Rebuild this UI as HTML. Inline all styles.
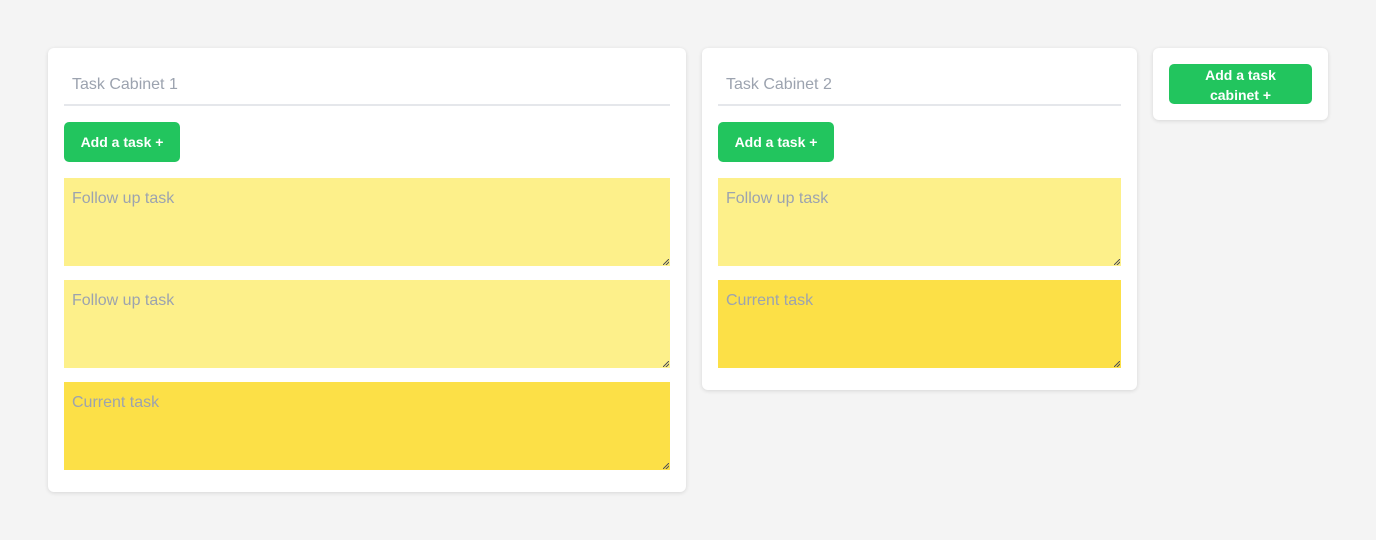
<!DOCTYPE html><html><head><style>
body{margin:0;background:#f4f4f4;font-family:"Liberation Sans",sans-serif;width:1376px;height:540px;position:relative;overflow:hidden}
.card{position:absolute;background:#fff;border-radius:6px;box-shadow:0 1px 4px rgba(0,0,0,.12)}
.title{position:absolute;left:16px;right:16px;top:16px;height:42px;border-bottom:2px solid #e5e7eb;color:#9ca3af;font-size:16px;line-height:42px;padding-left:8px;box-sizing:border-box}
.btn{position:absolute;background:#22c55e;color:#fff;border-radius:5px;font-size:14px;font-weight:bold;text-align:center}
.ta{position:absolute;left:16px;right:16px;height:88px;color:#9ca3af;font-size:16px;padding:12px 8px;box-sizing:border-box}
.f{background:#fdf08a}.c{background:#fce047}
.ta:after{content:"";position:absolute;right:1px;bottom:1px;width:6px;height:6px;background:linear-gradient(135deg,transparent 45%,#555 45%,#555 55%,transparent 55%,transparent 70%,#555 70%,#555 80%,transparent 80%)}
</style></head><body>
<div class="card" style="left:48px;top:48px;width:638px;height:444px">
<div class="title">Task Cabinet 1</div>
<div class="btn" style="left:16px;top:74px;width:116px;height:40px;line-height:40px">Add a task +</div>
<div class="ta f" style="top:130px">Follow up task</div>
<div class="ta f" style="top:232px">Follow up task</div>
<div class="ta c" style="top:334px">Current task</div>
</div>
<div class="card" style="left:702px;top:48px;width:435px;height:342px">
<div class="title">Task Cabinet 2</div>
<div class="btn" style="left:16px;top:74px;width:116px;height:40px;line-height:40px">Add a task +</div>
<div class="ta f" style="top:130px">Follow up task</div>
<div class="ta c" style="top:232px">Current task</div>
</div>
<div class="card" style="left:1153px;top:48px;width:175px;height:72px">
<div class="btn" style="left:16px;top:16px;width:143px;height:40px;line-height:20px;padding-top:1px;box-sizing:border-box">Add a task<br>cabinet +</div>
</div>
</body></html>
